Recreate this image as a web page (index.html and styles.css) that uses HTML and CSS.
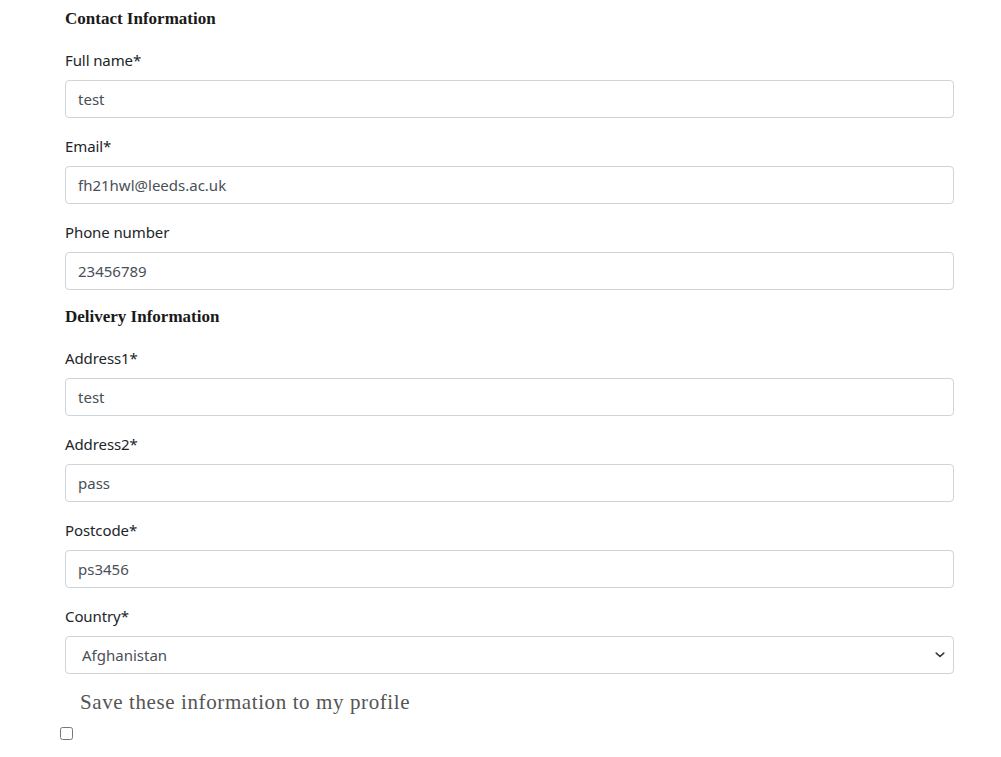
FILE: index.html
```
<!DOCTYPE html>
<html>
<head>
<meta charset="utf-8">
<link rel="stylesheet" href="styles.css">
</head>
<body>
<form class="form">
  <h5 class="section-title">Contact Information</h5>
  <div class="field">
    <label class="form-label">Full name*</label>
    <input class="form-control" type="text" value="test">
  </div>
  <div class="field">
    <label class="form-label">Email*</label>
    <input class="form-control" type="text" value="fh21hwl@leeds.ac.uk">
  </div>
  <div class="field">
    <label class="form-label">Phone number</label>
    <input class="form-control" type="text" value="23456789">
  </div>
  <h5 class="section-title">Delivery Information</h5>
  <div class="field">
    <label class="form-label">Address1*</label>
    <input class="form-control" type="text" value="test">
  </div>
  <div class="field">
    <label class="form-label">Address2*</label>
    <input class="form-control" type="text" value="pass">
  </div>
  <div class="field">
    <label class="form-label">Postcode*</label>
    <input class="form-control" type="text" value="ps3456">
  </div>
  <div class="field">
    <label class="form-label">Country*</label>
    <select class="form-control form-select">
      <option>Afghanistan</option>
    </select>
  </div>
  <div class="save">
    <label class="save-label">Save these information to my profile</label>
    <input class="save-check" type="checkbox">
  </div>
</form>
</body>
</html>
```
FILE: styles.css
```
html, body {
  margin: 0;
  padding: 0;
  background: #fff;
}
body {
  font-family: "Noto Sans", "Open Sans", sans-serif;
  font-size: 15px;
  line-height: 24px;
  color: #212529;
}
.form {
  width: 889px;
  margin-left: 65px;
  padding-top: 8px;
}
.section-title {
  font-family: "Liberation Serif", serif;
  font-size: 17px;
  font-weight: bold;
  line-height: 20px;
  padding-top: 1px;
  margin: 0 0 19px 0;
  color: #1a1a1a;
}
.field {
  margin-bottom: 16px;
}
.form-label {
  display: block;
  margin-bottom: 8px;
  letter-spacing: -0.1px;
}
.form-control {
  display: block;
  box-sizing: border-box;
  width: 100%;
  height: 38px;
  padding: 6px 12px;
  font-family: inherit;
  font-size: 15px;
  line-height: 24px;
  color: #495057;
  background: #fff;
  border: 1px solid #ced4da;
  border-radius: 4px;
  margin: 0;
}
.form-select {
  appearance: none;
  -webkit-appearance: none;
  padding-left: 16px;
  background-image: url("data:image/svg+xml,%3csvg xmlns='http://www.w3.org/2000/svg' viewBox='0 0 16 16'%3e%3cpath fill='none' stroke='%23343a40' stroke-linecap='round' stroke-linejoin='round' stroke-width='2.2' d='M3 5.5l5 4.5 5-4.5'/%3e%3c/svg%3e");
  background-repeat: no-repeat;
  background-position: right 7px center;
  background-size: 12px 12px;
}
.save {
  display: flex;
  flex-direction: column;
  align-items: flex-start;
}
.save-label {
  font-family: "Liberation Serif", serif;
  font-size: 21px;
  line-height: 24px;
  letter-spacing: 0.6px;
  color: #555;
  padding-left: 15px;
  margin-bottom: 10px;
}
.save-check {
  width: 13px;
  height: 13px;
  margin: 3px 0 0 -5px;
}
```
